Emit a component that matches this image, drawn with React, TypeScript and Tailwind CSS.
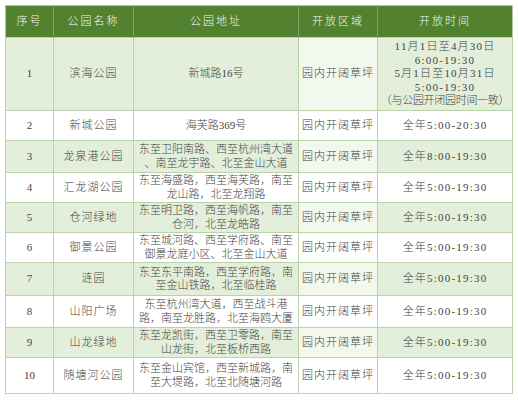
const rows = [
  {
    no: "1",
    name: "滨海公园",
    addr: ["新城路16号"],
    area: "园内开阔草坪",
    time: ["11月1日至4月30日", "6:00-19:30", "5月1日至10月31日", "5:00-19:30", "（与公园开闭园时间一致）"],
    h: "h-[73px]",
  },
  { no: "2", name: "新城公园", addr: ["海芙路369号"], area: "园内开阔草坪", time: ["全年5:00-20:30"], h: "h-[30px]" },
  {
    no: "3",
    name: "龙泉港公园",
    addr: ["东至卫阳南路、西至杭州湾大道", "、南至龙宇路、北至金山大道"],
    area: "园内开阔草坪",
    time: ["全年8:00-19:30"],
    h: "h-[32px]",
  },
  {
    no: "4",
    name: "汇龙湖公园",
    addr: ["东至海盛路，西至海芙路，南至", "龙山路，北至龙翔路"],
    area: "园内开阔草坪",
    time: ["全年5:00-19:30"],
    h: "h-[30px]",
  },
  {
    no: "5",
    name: "仓河绿地",
    addr: ["东至明卫路，西至海帆路，南至", "仓河，北至龙皓路"],
    area: "园内开阔草坪",
    time: ["全年5:00-19:30"],
    h: "h-[30px]",
  },
  {
    no: "6",
    name: "御景公园",
    addr: ["东至城河路、西至学府路、南至", "御景龙庭小区、北至金山大道"],
    area: "园内开阔草坪",
    time: ["全年5:00-19:30"],
    h: "h-[30px]",
  },
  {
    no: "7",
    name: "涟园",
    addr: ["东至东平南路，西至学府路，南", "至金山铁路，北至临桂路"],
    area: "园内开阔草坪",
    time: ["全年5:00-19:30"],
    h: "h-[33px]",
  },
  {
    no: "8",
    name: "山阳广场",
    addr: ["东至杭州湾大道，西至战斗港", "路，南至龙胜路，北至海鸥大厦"],
    area: "园内开阔草坪",
    time: ["全年5:00-19:30"],
    h: "h-[32px]",
  },
  {
    no: "9",
    name: "山龙绿地",
    addr: ["东至龙凯街，西至卫零路，南至", "山龙街，北至板桥西路"],
    area: "园内开阔草坪",
    time: ["全年5:00-19:30"],
    h: "h-[30px]",
  },
  {
    no: "10",
    name: "随塘河公园",
    addr: ["东至金山宾馆，西至新城路，南", "至大堤路，北至北随塘河路"],
    area: "园内开阔草坪",
    time: ["全年5:00-19:30"],
    h: "h-[36px]",
  },
];

export default function App() {
  return (
    <div className="h-[400px] w-[518px] bg-white pl-[5px] pt-[5px] font-['Liberation_Serif','Noto_Sans_CJK_SC',serif] text-[11px] leading-[13.5px] text-[#444]">
      <table className="w-[507px] table-fixed border-collapse border border-[#aecaa0]">
        <colgroup>
          <col className="w-[48px]" />
          <col className="w-[80px]" />
          <col className="w-[165px]" />
          <col className="w-[79px]" />
          <col className="w-[135px]" />
        </colgroup>
        <thead>
          <tr className="h-[32px] bg-[#52812f] text-[#f4f8f0]">
            <th className="border-r border-[#7da064] font-light tracking-[2px]">序号</th>
            <th className="border-r border-[#7da064] font-light tracking-[2px]">公园名称</th>
            <th className="border-r border-[#7da064] font-light tracking-[2px]">公园地址</th>
            <th className="border-r border-[#7da064] font-light tracking-[2px]">开放区域</th>
            <th className="font-light tracking-[2px]">开放时间</th>
          </tr>
        </thead>
        <tbody>
          {rows.map((r, i) => {
            const green = i % 2 === 0;
            const bg = green ? "bg-[#e3efda]" : "bg-white";
            const areaBg = green ? "bg-[#f3f8ef]" : "bg-white";
            return (
              <tr key={r.no} className={`${r.h} text-center font-light`}>
                <td className={`border border-[#b9d3aa] ${bg}`}>{r.no}</td>
                <td className={`border border-[#b9d3aa] ${bg} tracking-[1px]`}>{r.name}</td>
                <td className={`border border-[#b9d3aa] ${bg} px-1`}>
                  {r.addr.map((l) => (
                    <div key={l} className="whitespace-nowrap">{l}</div>
                  ))}
                </td>
                <td className={`border border-[#b9d3aa] ${areaBg} tracking-[1px]`}>{r.area}</td>
                <td className={`border border-[#b9d3aa] ${bg}`}>
                  {r.time.map((l) => (
                    <div
                      key={l}
                      className={`whitespace-nowrap ${l.startsWith("（") ? "tracking-[-0.3px]" : "tracking-[1.2px]"}`}
                    >
                      {l}
                    </div>
                  ))}
                </td>
              </tr>
            );
          })}
        </tbody>
      </table>
    </div>
  );
}
